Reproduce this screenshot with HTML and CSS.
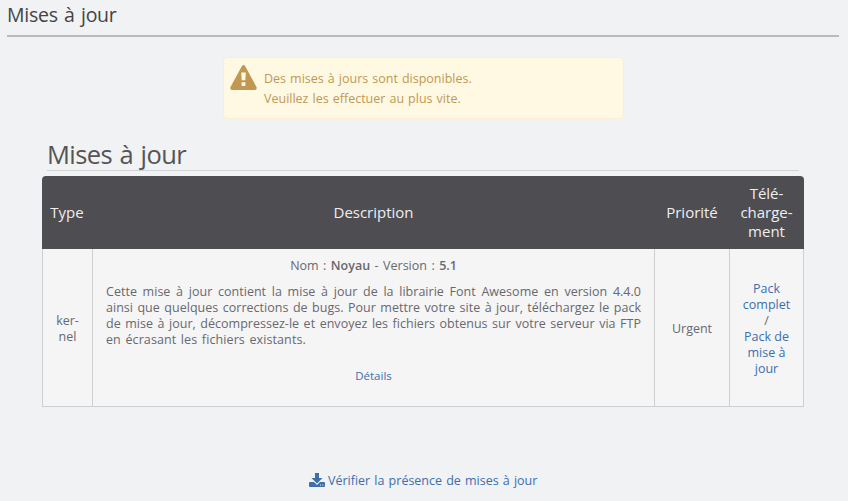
FILE: index.html
```html
<!DOCTYPE html>
<html lang="fr">
<head>
<meta charset="utf-8">
<title>Mises à jour</title>
<link rel="stylesheet" href="styles.css">
</head>
<body>
<header class="page-header"><h1>Mises à jour</h1></header>
<main>
<div class="warning">
<svg class="warning-icon" viewBox="0 0 27 25"><path fill="#c09853" fill-rule="evenodd" d="M11.8 1.2Q13.5-1 15.2 1.2L26.5 22Q27.3 24.5 25 25H2Q-.3 24.5.5 22ZM11.2 7.5L11.7 15.2H15.3L15.8 7.5ZM11.6 17.2V21H15.4V17.2Z"/></svg>
<p>Des mises à jours sont disponibles.<br>Veuillez les effectuer au plus vite.</p>
</div>
<section class="updates">
<h2>Mises à jour</h2>
<table>
<colgroup><col class="c-type"><col class="c-desc"><col class="c-prio"><col class="c-down"></colgroup>
<thead><tr><th>Type</th><th>Description</th><th>Priorité</th><th>Télé-<br>charge-<br>ment</th></tr></thead>
<tbody><tr>
<td>ker-<br>nel</td>
<td class="description">
<p class="name">Nom : <b>Noyau</b> - Version : <b>5.1</b></p>
<p class="text"><span>Cette mise à jour contient la mise à jour de la librairie Font Awesome en version 4.4.0</span> <span>ainsi que quelques corrections de bugs. Pour mettre votre site à jour, téléchargez le pack</span> <span>de mise à jour, décompressez-le et envoyez les fichiers obtenus sur votre serveur via FTP</span> <span>en écrasant les fichiers existants.</span></p>
<p class="details"><a href="#">Détails</a></p>
</td>
<td>Urgent</td>
<td><a href="#">Pack<br>complet</a><br>/<br><a href="#">Pack de<br>mise à<br>jour</a></td>
</tr></tbody>
</table>
</section>
<p class="check"><a href="#"><svg viewBox="0 0 16 14"><path fill="#3f6ea8" fill-rule="evenodd" d="M6 0H10V5H13.5L8 10.5L2.5 5H6ZM1 9H5L8 12L11 9H15Q16 9 16 10V13Q16 14 15 14H1Q0 14 0 13V10Q0 9 1 9ZM11 11.5V12.5H12V11.5ZM13.3 11.5V12.5H14.3V11.5Z"/></svg><span>Vérifier la présence de mises à jour</span></a></p>
</main>
</body>
</html>
```
FILE: styles.css
```css
* { box-sizing: border-box; }
body { margin: 0; height: 501px; overflow: hidden; background: #f0f2f4; color: #686870; font: 12.5px/16px "Trebuchet MS", "Open Sans", "Noto Sans", sans-serif; }
h1, h2, p { margin: 0; font-weight: 400; }
a { color: #3d6eae; text-decoration: none; }
.page-header { margin: 0 9px 0 7px; height: 37px; border-bottom: 2px solid #b8babd; color: #444; }
h1 { font-size: 19.5px; line-height: 29px; font-weight: 500; letter-spacing: -.25px; word-spacing: 1.5px; white-space: nowrap; }
.warning { display: flex; width: 401px; height: 62px; margin: 20px auto 0 223px; border: 1px solid #fbeed5; border-radius: 4px; background: #fff8e3; color: #c09853; }
.warning-icon { width: 27px; height: 25px; margin: 7px 7px 0 6px; flex: none; }
.warning p { line-height: 20px; margin-top: 11px; word-spacing: .8px; white-space: nowrap; }
.updates { width: 762px; margin: 18px 0 0 42px; }
h2 { margin: 0 5px 5px; height: 34px; border-bottom: 1px solid #d2d3d5; font-size: 25.5px; line-height: 34px; letter-spacing: -.6px; word-spacing: 1.5px; color: #555; white-space: nowrap; }
table { table-layout: fixed; width: 762px; border-collapse: separate; border-spacing: 0; }
.c-type { width: 51px; }
.c-desc { width: 562px; }
.c-prio { width: 75px; }
.c-down { width: 74px; }
th { height: 73px; padding: 0 1px 0 0; background: #4e4d52; color: #eee; font-size: 15px; line-height: 19px; letter-spacing: -.02px; font-weight: 400; }
th:first-child { border-top-left-radius: 4px; }
th:last-child { border-top-right-radius: 4px; }
td { height: 158px; padding: 2px 0 0; background: #f5f5f5; border: solid #cdcfd1; border-width: 0 1px 1px 0; text-align: center; vertical-align: middle; }
td:first-child { border-left-width: 1px; }
.description { vertical-align: top; padding: 9px 13px 0; }
.name { margin-bottom: 10px; word-spacing: 1.2px; }
.name b { font-weight: 600; }
.text span { display: block; white-space: nowrap; text-align: justify; text-align-last: justify; letter-spacing: .02px; }
.text span:last-child { text-align-last: left; word-spacing: 1.2px; letter-spacing: .1px; }
.details { margin-top: 20px; font-size: 11.5px; }
.check { display: flex; justify-content: flex-start; margin: 65px 0 0 309px; line-height: 17px; word-spacing: .9px; white-space: nowrap; }
.check a { display: flex; }
.check svg { width: 16px; height: 14px; margin: 1px 3px 0 0; }
```
